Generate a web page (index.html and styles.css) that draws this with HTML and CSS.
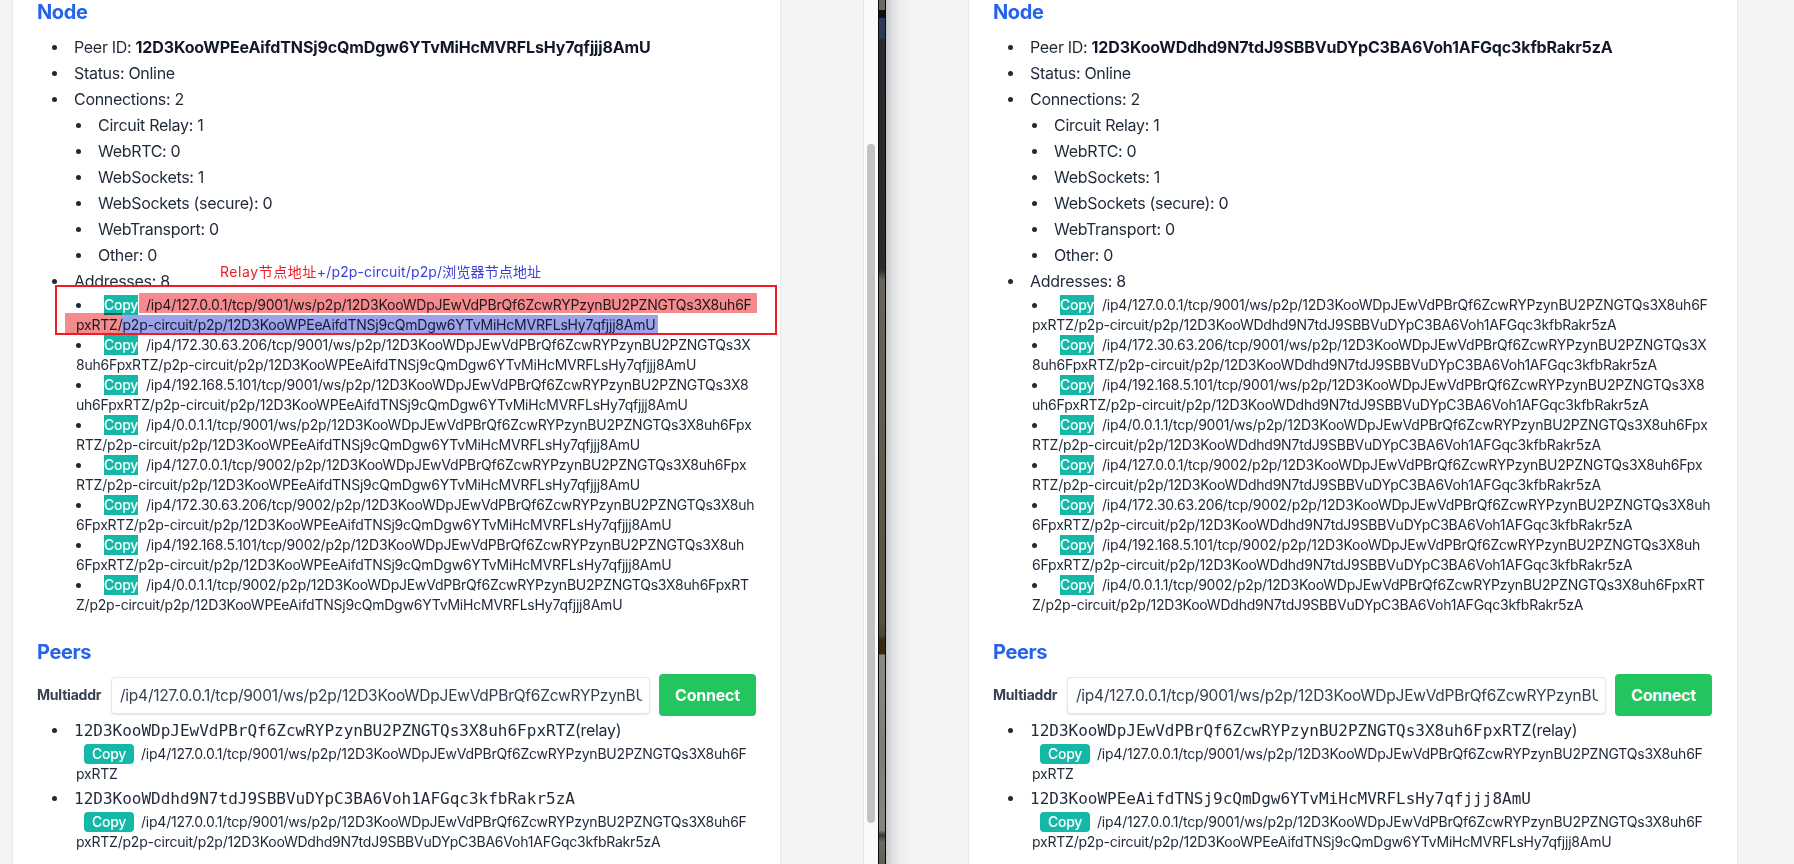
FILE: index.html
```html
<!DOCTYPE html>
<html lang="en">
<head>
<meta charset="utf-8">
<title>Node</title>
<link rel="stylesheet" href="styles.css">
</head>
<body>
<div class="desktop">
  <section class="window window-left">
    <div class="viewport">
      <main class="card">
        <h2 class="title">Node</h2>
        <ul class="list">
          <li>Peer ID: <strong>12D3KooWPEeAifdTNSj9cQmDgw6YTvMiHcMVRFLsHy7qfjjj8AmU</strong></li>
          <li>Status: Online</li>
          <li>Connections: 2
            <ul class="sublist">
              <li>Circuit Relay: 1</li>
              <li>WebRTC: 0</li>
              <li>WebSockets: 1</li>
              <li>WebSockets (secure): 0</li>
              <li>WebTransport: 0</li>
              <li>Other: 0</li>
            </ul>
          </li>
          <li>Addresses: 8
            <ul class="addresses">
              <li><button class="copy">Copy</button>/ip4/127.0.0.1/tcp/9001/ws/p2p/12D3KooWDpJEwVdPBrQf6ZcwRYPzynBU2PZNGTQs3X8uh6FpxRTZ/p2p-circuit/p2p/12D3KooWPEeAifdTNSj9cQmDgw6YTvMiHcMVRFLsHy7qfjjj8AmU</li>
              <li><button class="copy">Copy</button>/ip4/172.30.63.206/tcp/9001/ws/p2p/12D3KooWDpJEwVdPBrQf6ZcwRYPzynBU2PZNGTQs3X8uh6FpxRTZ/p2p-circuit/p2p/12D3KooWPEeAifdTNSj9cQmDgw6YTvMiHcMVRFLsHy7qfjjj8AmU</li>
              <li><button class="copy">Copy</button>/ip4/192.168.5.101/tcp/9001/ws/p2p/12D3KooWDpJEwVdPBrQf6ZcwRYPzynBU2PZNGTQs3X8uh6FpxRTZ/p2p-circuit/p2p/12D3KooWPEeAifdTNSj9cQmDgw6YTvMiHcMVRFLsHy7qfjjj8AmU</li>
              <li><button class="copy">Copy</button>/ip4/0.0.1.1/tcp/9001/ws/p2p/12D3KooWDpJEwVdPBrQf6ZcwRYPzynBU2PZNGTQs3X8uh6FpxRTZ/p2p-circuit/p2p/12D3KooWPEeAifdTNSj9cQmDgw6YTvMiHcMVRFLsHy7qfjjj8AmU</li>
              <li><button class="copy">Copy</button>/ip4/127.0.0.1/tcp/9002/p2p/12D3KooWDpJEwVdPBrQf6ZcwRYPzynBU2PZNGTQs3X8uh6FpxRTZ/p2p-circuit/p2p/12D3KooWPEeAifdTNSj9cQmDgw6YTvMiHcMVRFLsHy7qfjjj8AmU</li>
              <li><button class="copy">Copy</button>/ip4/172.30.63.206/tcp/9002/p2p/12D3KooWDpJEwVdPBrQf6ZcwRYPzynBU2PZNGTQs3X8uh6FpxRTZ/p2p-circuit/p2p/12D3KooWPEeAifdTNSj9cQmDgw6YTvMiHcMVRFLsHy7qfjjj8AmU</li>
              <li><button class="copy">Copy</button>/ip4/192.168.5.101/tcp/9002/p2p/12D3KooWDpJEwVdPBrQf6ZcwRYPzynBU2PZNGTQs3X8uh<br>6FpxRTZ/p2p-circuit/p2p/12D3KooWPEeAifdTNSj9cQmDgw6YTvMiHcMVRFLsHy7qfjjj8AmU</li>
              <li><button class="copy">Copy</button>/ip4/0.0.1.1/tcp/9002/p2p/12D3KooWDpJEwVdPBrQf6ZcwRYPzynBU2PZNGTQs3X8uh6FpxRTZ/p2p-circuit/p2p/12D3KooWPEeAifdTNSj9cQmDgw6YTvMiHcMVRFLsHy7qfjjj8AmU</li>
            </ul>
          </li>
        </ul>
        <h2 class="title title-peers">Peers</h2>
        <form class="connect-row">
          <label class="field-label">Multiaddr</label>
          <input class="field" value="/ip4/127.0.0.1/tcp/9001/ws/p2p/12D3KooWDpJEwVdPBrQf6ZcwRYPzynBU2PZNGTQs3X8uh6FpxRTZ">
          <button class="connect" type="button">Connect</button>
        </form>
        <ul class="list peers">
          <li><code class="peer-id">12D3KooWDpJEwVdPBrQf6ZcwRYPzynBU2PZNGTQs3X8uh6FpxRTZ</code>(relay)
            <div class="peer-addr"><button class="copy copy-round">Copy</button>/ip4/127.0.0.1/tcp/9001/ws/p2p/12D3KooWDpJEwVdPBrQf6ZcwRYPzynBU2PZNGTQs3X8uh6FpxRTZ</div>
          </li>
          <li><code class="peer-id">12D3KooWDdhd9N7tdJ9SBBVuDYpC3BA6Voh1AFGqc3kfbRakr5zA</code>
            <div class="peer-addr"><button class="copy copy-round">Copy</button>/ip4/127.0.0.1/tcp/9001/ws/p2p/12D3KooWDpJEwVdPBrQf6ZcwRYPzynBU2PZNGTQs3X8uh6FpxRTZ/p2p-circuit/p2p/12D3KooWDdhd9N7tdJ9SBBVuDYpC3BA6Voh1AFGqc3kfbRakr5zA</div>
          </li>
        </ul>
      </main>
    </div>
    <div class="scrollbar"><div class="thumb"></div></div>
    <div class="mark mark-red-a"></div>
    <div class="mark mark-red-b"></div>
    <div class="mark mark-blue"></div>
    <div class="callout"></div>
    <p class="note"><span class="note-red">Relay节点地址</span><span class="note-blue">+/p2p-circuit/p2p/浏览器节点地址</span></p>
  </section>
  <div class="wallpaper"></div>
  <section class="window window-right">
    <main class="card">
      <h2 class="title">Node</h2>
      <ul class="list">
        <li>Peer ID: <strong>12D3KooWDdhd9N7tdJ9SBBVuDYpC3BA6Voh1AFGqc3kfbRakr5zA</strong></li>
        <li>Status: Online</li>
        <li>Connections: 2
          <ul class="sublist">
            <li>Circuit Relay: 1</li>
            <li>WebRTC: 0</li>
            <li>WebSockets: 1</li>
            <li>WebSockets (secure): 0</li>
            <li>WebTransport: 0</li>
            <li>Other: 0</li>
          </ul>
        </li>
        <li>Addresses: 8
          <ul class="addresses">
            <li><button class="copy">Copy</button>/ip4/127.0.0.1/tcp/9001/ws/p2p/12D3KooWDpJEwVdPBrQf6ZcwRYPzynBU2PZNGTQs3X8uh6FpxRTZ/p2p-circuit/p2p/12D3KooWDdhd9N7tdJ9SBBVuDYpC3BA6Voh1AFGqc3kfbRakr5zA</li>
            <li><button class="copy">Copy</button>/ip4/172.30.63.206/tcp/9001/ws/p2p/12D3KooWDpJEwVdPBrQf6ZcwRYPzynBU2PZNGTQs3X8uh6FpxRTZ/p2p-circuit/p2p/12D3KooWDdhd9N7tdJ9SBBVuDYpC3BA6Voh1AFGqc3kfbRakr5zA</li>
            <li><button class="copy">Copy</button>/ip4/192.168.5.101/tcp/9001/ws/p2p/12D3KooWDpJEwVdPBrQf6ZcwRYPzynBU2PZNGTQs3X8uh6FpxRTZ/p2p-circuit/p2p/12D3KooWDdhd9N7tdJ9SBBVuDYpC3BA6Voh1AFGqc3kfbRakr5zA</li>
            <li><button class="copy">Copy</button>/ip4/0.0.1.1/tcp/9001/ws/p2p/12D3KooWDpJEwVdPBrQf6ZcwRYPzynBU2PZNGTQs3X8uh6FpxRTZ/p2p-circuit/p2p/12D3KooWDdhd9N7tdJ9SBBVuDYpC3BA6Voh1AFGqc3kfbRakr5zA</li>
            <li><button class="copy">Copy</button>/ip4/127.0.0.1/tcp/9002/p2p/12D3KooWDpJEwVdPBrQf6ZcwRYPzynBU2PZNGTQs3X8uh6FpxRTZ/p2p-circuit/p2p/12D3KooWDdhd9N7tdJ9SBBVuDYpC3BA6Voh1AFGqc3kfbRakr5zA</li>
            <li><button class="copy">Copy</button>/ip4/172.30.63.206/tcp/9002/p2p/12D3KooWDpJEwVdPBrQf6ZcwRYPzynBU2PZNGTQs3X8uh6FpxRTZ/p2p-circuit/p2p/12D3KooWDdhd9N7tdJ9SBBVuDYpC3BA6Voh1AFGqc3kfbRakr5zA</li>
            <li><button class="copy">Copy</button>/ip4/192.168.5.101/tcp/9002/p2p/12D3KooWDpJEwVdPBrQf6ZcwRYPzynBU2PZNGTQs3X8uh<br>6FpxRTZ/p2p-circuit/p2p/12D3KooWDdhd9N7tdJ9SBBVuDYpC3BA6Voh1AFGqc3kfbRakr5zA</li>
            <li><button class="copy">Copy</button>/ip4/0.0.1.1/tcp/9002/p2p/12D3KooWDpJEwVdPBrQf6ZcwRYPzynBU2PZNGTQs3X8uh6FpxRTZ/p2p-circuit/p2p/12D3KooWDdhd9N7tdJ9SBBVuDYpC3BA6Voh1AFGqc3kfbRakr5zA</li>
          </ul>
        </li>
      </ul>
      <h2 class="title title-peers">Peers</h2>
      <form class="connect-row">
        <label class="field-label">Multiaddr</label>
        <input class="field" value="/ip4/127.0.0.1/tcp/9001/ws/p2p/12D3KooWDpJEwVdPBrQf6ZcwRYPzynBU2PZNGTQs3X8uh6FpxRTZ">
        <button class="connect" type="button">Connect</button>
      </form>
      <ul class="list peers">
        <li><code class="peer-id">12D3KooWDpJEwVdPBrQf6ZcwRYPzynBU2PZNGTQs3X8uh6FpxRTZ</code>(relay)
          <div class="peer-addr"><button class="copy copy-round">Copy</button>/ip4/127.0.0.1/tcp/9001/ws/p2p/12D3KooWDpJEwVdPBrQf6ZcwRYPzynBU2PZNGTQs3X8uh6FpxRTZ</div>
        </li>
        <li><code class="peer-id">12D3KooWPEeAifdTNSj9cQmDgw6YTvMiHcMVRFLsHy7qfjjj8AmU</code>
          <div class="peer-addr"><button class="copy copy-round">Copy</button>/ip4/127.0.0.1/tcp/9001/ws/p2p/12D3KooWDpJEwVdPBrQf6ZcwRYPzynBU2PZNGTQs3X8uh6FpxRTZ/p2p-circuit/p2p/12D3KooWPEeAifdTNSj9cQmDgw6YTvMiHcMVRFLsHy7qfjjj8AmU</div>
        </li>
      </ul>
    </main>
  </section>
</div>
</body>
</html>
```
FILE: styles.css
```css
* { box-sizing: border-box; }
html, body { margin: 0; height: 100%; overflow: hidden; }
body {
  font-family: Inter, "Noto Sans CJK SC", sans-serif;
  font-size: 16px;
  line-height: 24px;
  letter-spacing: -0.3px;
  color: #1f2937;
  background: #f3f4f6;
}
.desktop { display: flex; height: 864px; overflow: hidden; }

.window { position: relative; display: flex; height: 864px; overflow: hidden; background: #f3f4f6; }
.window-left { flex: 0 0 878px; }
.window-right {
  flex: 1 1 0;
  padding-left: 83px;
  background: linear-gradient(90deg, #c4c6c8 0, #dcdee0 6px, #eceef0 14px, #f3f4f6 26px);
}
.viewport { flex: 0 0 863px; padding-left: 13px; }
.scrollbar {
  flex: 0 0 15px;
  background: #fafafa;
  border-left: 1px solid #e8e8e8;
  padding: 144px 3px 0;
}
.thumb { width: 8px; height: 679px; border-radius: 4px; background: #c2c2c2; }
.wallpaper {
  flex: 0 0 8px;
  border-left: 1px solid #0a0a0a;
  border-right: 1px solid #0a0a0a;
  background: linear-gradient(180deg,
    #6b6a60 0, #6b6a60 10px, #111 10px, #111 18px, #2b3b5c 18px, #2f3a50 38px,
    #2a2a2e 40px, #2b2a2d 270px, #66645c 280px, #55523f 620px, #4a4636 636px,
    #38280f 640px, #38280f 654px, #8a8a82 655px, #7d7d76 750px, #85857e 830px,
    #3a3a36 835px, #6a6a60 842px, #5e5e54 864px);
}

.card {
  flex: 0 0 768px;
  width: 767px;
  height: 864px;
  padding: 0 24px;
  background: #fff;
  box-shadow: 0 0 2px rgba(0, 0, 0, 0.12);
  overflow: hidden;
}
.window-right .card { width: 768px; }

.title { margin: 0 0 11px; font-size: 20px; line-height: 24px; font-weight: 700; letter-spacing: -0.4px; color: #2563eb; }
.title-peers { margin: 25px 0 10px; }

.list { margin: 0; padding: 0 0 0 37px; list-style: none; }
.list > li { position: relative; margin-bottom: 2px; }
.list strong { font-weight: 700; letter-spacing: -0.13px; color: #111827; }
.list > li::before,
.sublist > li::before {
  content: "";
  position: absolute;
  left: -22px;
  top: 10px;
  width: 5px;
  height: 5px;
  border-radius: 50%;
  background: #1f2937;
}
.sublist { margin: 2px 0 0; padding: 0 0 0 24px; list-style: none; }
.sublist li { position: relative; margin-bottom: 2px; }

.addresses {
  margin: 2px 0 0;
  padding: 0 0 0 2px;
  list-style: disc inside;
  font-size: 14px;
  line-height: 20px;
  letter-spacing: -0.22px;
  word-break: break-all;
  width: 681px;
}
.addresses li { height: 40px; }
.copy {
  display: inline-block;
  width: 34px;
  height: 20px;
  margin: 0 8px 0 8px;
  padding: 0;
  border: 0;
  background: #14b8a6;
  color: #fff;
  font-family: Inter, sans-serif;
  font-size: 14px;
  line-height: 20px;
  font-weight: 500;
  letter-spacing: -0.3px;
  vertical-align: top;
}
.copy-round { width: 50px; margin: 0 7px 0 8px; border-radius: 4px; }

.connect-row { display: flex; align-items: center; gap: 9px; width: 720px; height: 42px; }
.field-label { flex: 0 0 66px; margin-right: -1px; font-size: 14px; font-weight: 700; letter-spacing: -0.2px; color: #374151; }
.field {
  flex: 0 0 539px;
  height: 37px;
  padding: 0 7px 0 8px;
  border: 1px solid #e5e7eb;
  border-radius: 4px;
  box-shadow: 0 1px 2px rgba(0, 0, 0, 0.1);
  font-family: Inter, sans-serif;
  font-size: 15.5px;
  letter-spacing: -0.24px;
  color: #374151;
  background: #fff;
}
.connect {
  flex: 0 0 97px;
  height: 42px;
  border: 0;
  border-radius: 4px;
  background: #22c55e;
  color: #fff;
  font-family: Inter, sans-serif;
  font-size: 16px;
  font-weight: 700;
  letter-spacing: -0.2px;
}

.peers { margin-top: 2px; width: 720px; }
.peers > li { margin-bottom: 2px; }
.peer-id { font-family: "DejaVu Sans Mono", monospace; font-size: 16px; letter-spacing: 0; }
.peer-addr {
  width: 676px;
  margin: 1px 0 0 2px;
  font-size: 14px;
  line-height: 20px;
  letter-spacing: -0.22px;
  word-break: break-all;
}

.mark { position: absolute; mix-blend-mode: multiply; }
.mark-red-a { left: 139px; top: 293px; width: 618px; height: 20px; background: #f68b8e; }
.mark-red-b { left: 65px; top: 313px; width: 57px; height: 20px; background: #f68b8e; }
.mark-blue { left: 122px; top: 315px; width: 536px; height: 18px; background: #9ea2e8; }
.callout { position: absolute; left: 55px; top: 285px; width: 722px; height: 50px; border: 2px solid #ee1c25; }
.note {
  position: absolute;
  left: 220px;
  top: 262px;
  margin: 0;
  font-size: 14px;
  line-height: 20px;
  letter-spacing: 0;
  white-space: nowrap;
}
.note-red { color: #ee1c25; letter-spacing: 0.55px; }
.note-blue { color: #3b3fd8; letter-spacing: 0.14px; }
```
